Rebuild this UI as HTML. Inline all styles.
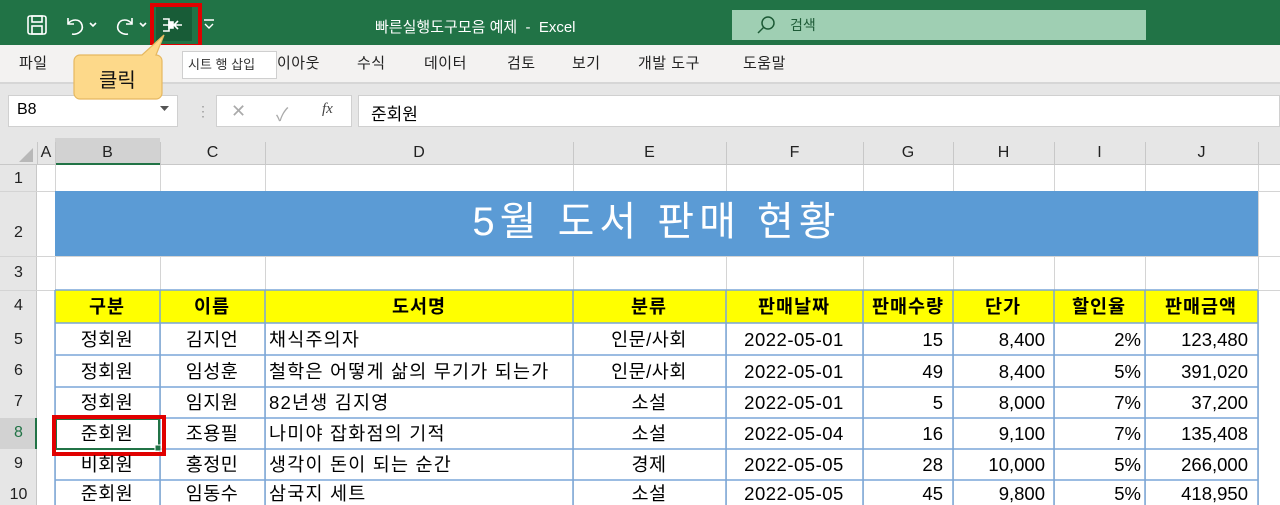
<!DOCTYPE html>
<html><head><meta charset="utf-8"><style>
*{margin:0;padding:0;box-sizing:border-box}
body{width:1280px;height:505px;overflow:hidden;position:relative;background:#fff;font-family:"Liberation Sans","Noto Sans CJK KR",sans-serif;color:#000}
.a{position:absolute}
.tab{position:absolute;top:52px;font-size:15px;color:#222;letter-spacing:0.5px}
.vl{position:absolute;width:1px;background:#d4d4d4}
.hl{position:absolute;height:1px;background:#d4d4d4}
.rh{position:absolute;left:0;width:37px;text-align:center;font-size:16px;color:#222}
.ch{position:absolute;top:140px;height:25px;line-height:25px;text-align:center;font-size:16px;color:#222}
</style></head><body>
<!-- title bar -->
<div class="a" style="left:0;top:0;width:1280px;height:45px;background:#217346"></div>
<svg class="a" style="left:26px;top:14px" width="22" height="22" viewBox="0 0 22 22" fill="none" stroke="#fff" stroke-width="1.6"><rect x="2" y="2" width="18" height="18" rx="2"/><rect x="6" y="2" width="10" height="6"/><rect x="6" y="12" width="10" height="8"/></svg>
<svg class="a" style="left:64px;top:14px" width="40" height="22" viewBox="0 0 40 22" fill="none" stroke="#fff" stroke-width="1.6"><path d="M4 4v6h6"/><path d="M4 10c3-5 12-6 14 1s-6 10-10 9"/><path d="M26 9l3 3 3-3"/></svg>
<svg class="a" style="left:112px;top:14px" width="40" height="22" viewBox="0 0 40 22" fill="none" stroke="#fff" stroke-width="1.6"><path d="M20 4v6h-6"/><path d="M20 10c-3-5-12-6-14 1s6 10 10 9"/><path d="M28 9l3 3 3-3"/></svg>
<div class="a" style="left:150px;top:3px;width:52px;height:45px;border:4px solid #e00000"></div>
<div class="a" style="left:156px;top:7px;width:36px;height:34px;background:#185c37"></div>
<svg class="a" style="left:160px;top:15px" width="26" height="20" viewBox="0 0 26 20" fill="none" stroke="#fff" stroke-width="1.6"><path d="M3 4h6v12H3M3 10h6"/><rect x="9" y="7" width="4" height="6" fill="#fff"/><path d="M22 10h-7M18 6l-4 4 4 4"/></svg>
<svg class="a" style="left:202px;top:18px" width="14" height="12" viewBox="0 0 14 12" fill="none" stroke="#fff" stroke-width="1.4"><path d="M2 2h10M3 6l4 4 4-4"/></svg>
<div class="a" style="left:375px;top:16px;font-size:15px;color:#fff">빠른실행도구모음 예제&nbsp; -&nbsp; Excel</div>
<div class="a" style="left:732px;top:10px;width:414px;height:30px;background:#9fcfb3"></div>
<svg class="a" style="left:755px;top:14px" width="22" height="22" viewBox="0 0 22 22" fill="none" stroke="#1d5a36" stroke-width="1.5"><circle cx="13" cy="9" r="6"/><path d="M9 13l-6 6"/></svg>
<div class="a" style="left:790px;top:15px;font-size:14px;color:#1d5a36">검색</div>
<!-- ribbon tabs -->
<div class="a" style="left:0;top:45px;width:1280px;height:37px;background:#f3f2f1"></div>
<div class="tab" style="left:19px">파일</div>
<div class="tab" style="left:277px">이아웃</div>
<div class="tab" style="left:357px">수식</div>
<div class="tab" style="left:424px">데이터</div>
<div class="tab" style="left:507px">검토</div>
<div class="tab" style="left:572px">보기</div>
<div class="tab" style="left:638px">개발 도구</div>
<div class="tab" style="left:743px">도움말</div>
<div class="a" style="left:182px;top:51px;width:95px;height:28px;background:#fff;border:1px solid #cfcfcf;font-size:13px;line-height:26px;padding-left:5px;color:#333">시트 행 삽입</div>
<div class="a" style="left:0;top:82px;width:1280px;height:58px;background:#e6e6e6"></div>
<div class="a" style="left:0;top:82px;width:1280px;height:2px;background:#d6d6d6"></div>
<!-- formula bar -->
<div class="a" style="left:8px;top:95px;width:170px;height:32px;background:#fff;border:1px solid #d0d0d0"></div>
<div class="a" style="left:17px;top:101px;font-size:16px">B8</div>
<svg class="a" style="left:160px;top:106px" width="10" height="6"><path d="M0 0h9l-4.5 5z" fill="#555"/></svg>
<div class="a" style="left:196px;top:103px;font-size:14px;color:#999">⋮</div>
<div class="a" style="left:216px;top:95px;width:136px;height:32px;background:#fff;border:1px solid #d0d0d0"></div>
<div class="a" style="left:231px;top:101px;font-size:18px;color:#aaa">✕</div>
<div class="a" style="left:276px;top:101px;font-size:18px;color:#aaa">✓</div>
<div class="a" style="left:322px;top:101px;font-size:15px;font-style:italic;font-family:'Liberation Serif',serif;color:#444">fx</div>
<div class="a" style="left:358px;top:95px;width:922px;height:32px;background:#fff;border:1px solid #d0d0d0"></div>
<div class="a" style="left:371px;top:100px;font-size:17px">준회원</div>
<!-- callout (on top) -->
<svg class="a" style="left:72px;top:33px" width="100" height="70" viewBox="0 0 100 70"><path d="M8 22h62l22-20-8 20h0a6 6 0 0 1 6 6v32a6 6 0 0 1-6 6H8a6 6 0 0 1-6-6V28a6 6 0 0 1 6-6z" fill="#fdd98a" stroke="#e6b860" stroke-width="1.2"/></svg>
<div class="a" style="left:99px;top:64px;font-size:20px;color:#111">클릭</div>
<!-- headers -->
<div class="a" style="left:0;top:138px;width:1280px;height:27px;background:#e6e6e6;border-bottom:1px solid #c8c8c8"></div>
<div class="a" style="left:0;top:165px;width:37px;height:340px;background:#e6e6e6;border-right:1px solid #c8c8c8"></div>
<svg class="a" style="left:18px;top:147px" width="16" height="16"><path d="M15 1v14H1z" fill="#b8b8b8"/></svg>
<div class="a" style="left:55px;top:138px;width:105px;height:27px;background:#d2d2d2;border-bottom:2px solid #217346"></div>
<div class="a" style="left:0;top:418px;width:37px;height:31px;background:#d2d2d2;border-right:2px solid #217346"></div>
<div class="ch" style="left:37px;width:18px">A</div>
<div class="ch" style="left:55px;width:105px">B</div>
<div class="ch" style="left:160px;width:105px">C</div>
<div class="ch" style="left:265px;width:308px">D</div>
<div class="ch" style="left:573px;width:153px">E</div>
<div class="ch" style="left:726px;width:137px">F</div>
<div class="ch" style="left:863px;width:90px">G</div>
<div class="ch" style="left:953px;width:101px">H</div>
<div class="ch" style="left:1054px;width:91px">I</div>
<div class="ch" style="left:1145px;width:113px">J</div>
<div class="vl" style="left:37px;top:142px;height:23px;background:#c8c8c8"></div>
<div class="vl" style="left:55px;top:142px;height:23px;background:#c8c8c8"></div>
<div class="vl" style="left:160px;top:142px;height:23px;background:#c8c8c8"></div>
<div class="vl" style="left:265px;top:142px;height:23px;background:#c8c8c8"></div>
<div class="vl" style="left:573px;top:142px;height:23px;background:#c8c8c8"></div>
<div class="vl" style="left:726px;top:142px;height:23px;background:#c8c8c8"></div>
<div class="vl" style="left:863px;top:142px;height:23px;background:#c8c8c8"></div>
<div class="vl" style="left:953px;top:142px;height:23px;background:#c8c8c8"></div>
<div class="vl" style="left:1054px;top:142px;height:23px;background:#c8c8c8"></div>
<div class="vl" style="left:1145px;top:142px;height:23px;background:#c8c8c8"></div>
<div class="vl" style="left:1258px;top:142px;height:23px;background:#c8c8c8"></div>
<div class="vl" style="left:55px;top:165px;height:340px"></div>
<div class="vl" style="left:160px;top:165px;height:340px"></div>
<div class="vl" style="left:265px;top:165px;height:340px"></div>
<div class="vl" style="left:573px;top:165px;height:340px"></div>
<div class="vl" style="left:726px;top:165px;height:340px"></div>
<div class="vl" style="left:863px;top:165px;height:340px"></div>
<div class="vl" style="left:953px;top:165px;height:340px"></div>
<div class="vl" style="left:1054px;top:165px;height:340px"></div>
<div class="vl" style="left:1145px;top:165px;height:340px"></div>
<div class="vl" style="left:1258px;top:165px;height:340px"></div>
<div class="hl" style="left:0;top:191px;width:1280px"></div>
<div class="hl" style="left:0;top:256px;width:1280px"></div>
<div class="hl" style="left:0;top:290px;width:1280px"></div>
<div class="a" style="left:55px;top:191px;width:1203px;height:65px;background:#5b9bd5;color:#fff;font-size:40px;text-align:center;line-height:63px;letter-spacing:5px">5월 도서 판매 현황</div>
<div class="rh" style="top:170px">1</div>
<div class="rh" style="top:224px">2</div>
<div class="rh" style="top:264px">3</div>
<div class="rh" style="top:297px">4</div>
<div class="rh" style="top:331px">5</div>
<div class="rh" style="top:362px">6</div>
<div class="rh" style="top:393px">7</div>
<div class="rh" style="top:424px;color:#217346">8</div>
<div class="rh" style="top:455px">9</div>
<div class="rh" style="top:486px">10</div>
<svg class="a" style="left:0;top:0" width="1280" height="505">
<rect x="55" y="290" width="1203" height="33" fill="#ffff00"/>
<g stroke="#7aa6d8" stroke-width="1.5">
<line x1="55" y1="290" x2="1258" y2="290"/><line x1="55" y1="323" x2="1258" y2="323"/>
<line x1="55" y1="355" x2="1258" y2="355"/><line x1="55" y1="387" x2="1258" y2="387"/>
<line x1="55" y1="418" x2="1258" y2="418"/><line x1="55" y1="449" x2="1258" y2="449"/>
<line x1="55" y1="480" x2="1258" y2="480"/>
<line x1="55" y1="290" x2="55" y2="505"/><line x1="160" y1="290" x2="160" y2="505"/>
<line x1="265" y1="290" x2="265" y2="505"/><line x1="573" y1="290" x2="573" y2="505"/>
<line x1="726" y1="290" x2="726" y2="505"/><line x1="863" y1="290" x2="863" y2="505"/>
<line x1="953" y1="290" x2="953" y2="505"/><line x1="1054" y1="290" x2="1054" y2="505"/>
<line x1="1145" y1="290" x2="1145" y2="505"/><line x1="1258" y1="290" x2="1258" y2="505"/>
</g>
<rect x="56" y="419" width="103" height="30" fill="none" stroke="#217346" stroke-width="2"/>
<rect x="155" y="445" width="6" height="6" fill="#217346" stroke="#fff"/>
<rect x="54" y="417" width="110" height="37" fill="none" stroke="#e00000" stroke-width="4"/>
<g font-family="Liberation Sans, Noto Sans CJK KR, sans-serif" font-size="18.5">
<g font-weight="bold" text-anchor="middle" letter-spacing="1">
<text x="107" y="313">구분</text><text x="212" y="313">이름</text><text x="419" y="313">도서명</text>
<text x="649" y="313">분류</text><text x="794" y="313">판매날짜</text><text x="908" y="313">판매수량</text>
<text x="1003" y="313">단가</text><text x="1099" y="313">할인율</text><text x="1201" y="313">판매금액</text>
</g>
<g text-anchor="middle" letter-spacing="0.5">
<text x="107" y="346">정회원</text><text x="212" y="346">김지언</text><text x="649" y="346">인문/사회</text><text x="794" y="346">2022-05-01</text>
<text x="107" y="378">정회원</text><text x="212" y="378">임성훈</text><text x="649" y="378">인문/사회</text><text x="794" y="378">2022-05-01</text>
<text x="107" y="409">정회원</text><text x="212" y="409">임지원</text><text x="649" y="409">소설</text><text x="794" y="409">2022-05-01</text>
<text x="107" y="440">준회원</text><text x="212" y="440">조용필</text><text x="649" y="440">소설</text><text x="794" y="440">2022-05-04</text>
<text x="107" y="471">비회원</text><text x="212" y="471">홍정민</text><text x="649" y="471">경제</text><text x="794" y="471">2022-05-05</text>
<text x="107" y="500">준회원</text><text x="212" y="500">임동수</text><text x="649" y="500">소설</text><text x="794" y="500">2022-05-05</text>
</g>
<g letter-spacing="1.2">
<text x="269" y="346">채식주의자</text>
<text x="269" y="378">철학은 어떻게 삶의 무기가 되는가</text>
<text x="269" y="409">82년생 김지영</text>
<text x="269" y="440">나미야 잡화점의 기적</text>
<text x="269" y="471">생각이 돈이 되는 순간</text>
<text x="269" y="500">삼국지 세트</text>
</g>
<g text-anchor="end">
<text x="943" y="346">15</text><text x="1045" y="346">8,400</text><text x="1141" y="346">2%</text><text x="1248" y="346">123,480</text>
<text x="943" y="378">49</text><text x="1045" y="378">8,400</text><text x="1141" y="378">5%</text><text x="1248" y="378">391,020</text>
<text x="943" y="409">5</text><text x="1045" y="409">8,000</text><text x="1141" y="409">7%</text><text x="1248" y="409">37,200</text>
<text x="943" y="440">16</text><text x="1045" y="440">9,100</text><text x="1141" y="440">7%</text><text x="1248" y="440">135,408</text>
<text x="943" y="471">28</text><text x="1045" y="471">10,000</text><text x="1141" y="471">5%</text><text x="1248" y="471">266,000</text>
<text x="943" y="500">45</text><text x="1045" y="500">9,800</text><text x="1141" y="500">5%</text><text x="1248" y="500">418,950</text>
</g>
</g>
</svg>
</body></html>
